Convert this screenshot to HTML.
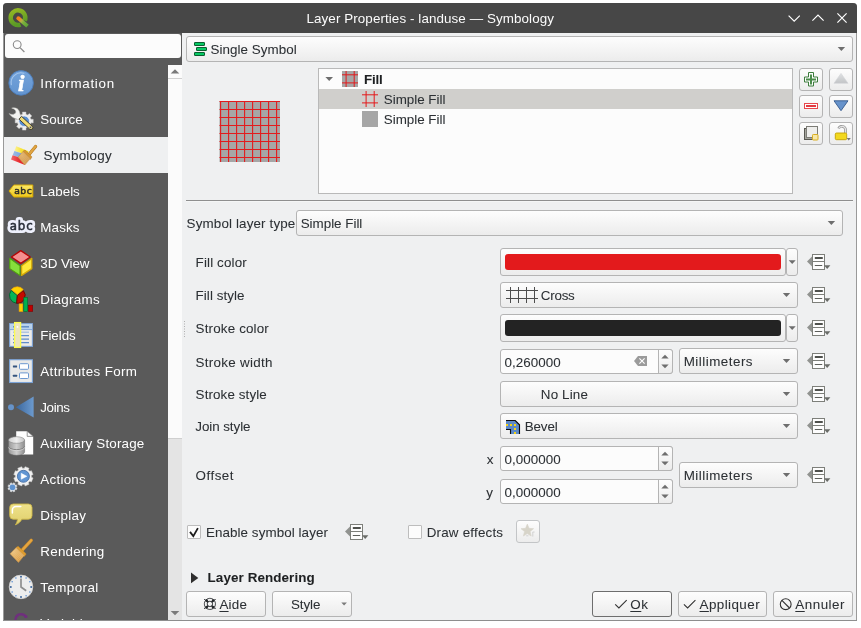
<!DOCTYPE html>
<html lang="en"><head><meta charset="utf-8"><title>Layer Properties - landuse — Symbology</title>
<style>
html,body{margin:0;padding:0}
body{width:861px;height:628px;position:relative;overflow:hidden;background:#fff}
#root{position:absolute;left:0;top:0;width:861px;height:628px;overflow:hidden;background:#fff;font-family:"Liberation Sans",sans-serif;font-size:13.4px;color:#2c3034;will-change:transform}
.a,.t,svg{position:absolute}
.g{display:block;position:static;margin:0;padding:0;border:0;list-style:none}
svg{z-index:1}
.t{white-space:nowrap;line-height:20px;height:20px;-webkit-text-stroke:0.06px;z-index:2}
.t.w{color:#fff;-webkit-text-stroke:0}
.t.b{font-weight:700;color:#1e2022}
.top{z-index:3}
u{text-decoration:underline;text-underline-offset:2px;text-decoration-thickness:1px}
#win{left:3px;top:3px;width:854px;height:618px;background:#eff0f1;border-radius:4px 4px 0 0;box-shadow:inset 0 -1px 0 #8e8e8e, inset 1px 0 0 #9a9a9a, inset -1px 0 0 #9a9a9a}
#title{left:3px;top:3px;width:854px;height:30px;background:#474747;border-radius:4px 4px 0 0}
#side{left:4px;top:60px;width:164px;height:560px;background:#5a5a5a;overflow:hidden}
#sel{left:4px;top:137px;width:164px;height:36px;background:#eff0f1}
.btn{box-sizing:border-box;border:1px solid #b4b4b4;border-radius:3px;background:linear-gradient(#fdfdfd,#ececec)}
.inp{box-sizing:border-box;border:1px solid #b4b4b4;border-radius:3px;background:#fcfcfc}
.sw{border-radius:3px}
</style></head>
<body>
<div id="root">
<div class="a" id="win"></div>
<header class="g" id="titlebar">
<div class="a" id="title"></div>
<span class="t w" style="left:306.5px;top:8.5px;color:#fcfcfc;letter-spacing:0.09px;">Layer Properties - landuse — Symbology</span>
</header>
<nav class="g" id="options-list">
<div class="a " style="left:4px;top:33px;width:178px;height:27px;background:#5a5a5a"></div>
<div class="a " style="left:5px;top:33.5px;width:176px;height:24.799999999999997px;background:#fcfcfc;border-radius:3px"></div>
<div class="a" id="side"></div>
<div class="a" id="sel"></div>
<div class="a " style="left:168px;top:60px;width:14px;height:5px;background:#5a5a5a"></div>
<div class="a " style="left:168px;top:65px;width:14px;height:555px;background:#e4e4e4"></div>
<div class="a " style="left:168px;top:65px;width:14px;height:373px;background:#fbfbfb"></div>
<div class="a " style="left:168px;top:78px;width:14px;height:1px;background:#d0d0d0"></div>
<div class="a " style="left:168px;top:438px;width:14px;height:1px;background:#cfcfcf"></div>
<ul class="g">
<li class="g"><span class="t w" style="left:40.3px;top:74px;letter-spacing:0.68px;">Information</span></li>
<li class="g"><span class="t w" style="left:40.3px;top:110px;letter-spacing:0.01px;">Source</span></li>
<li class="g"><span class="t" style="left:43.5px;top:146px;letter-spacing:0.23px;">Symbology</span></li>
<li class="g"><span class="t w" style="left:40.3px;top:182px;letter-spacing:0.01px;">Labels</span></li>
<li class="g"><span class="t w" style="left:40.3px;top:218px;letter-spacing:0.12px;">Masks</span></li>
<li class="g"><span class="t w" style="left:40.3px;top:254px;letter-spacing:-0.07px;">3D View</span></li>
<li class="g"><span class="t w" style="left:40.3px;top:290px;letter-spacing:0.31px;">Diagrams</span></li>
<li class="g"><span class="t w" style="left:40.3px;top:326px;letter-spacing:-0.05px;">Fields</span></li>
<li class="g"><span class="t w" style="left:40.3px;top:362px;letter-spacing:0.37px;">Attributes Form</span></li>
<li class="g"><span class="t w" style="left:40.3px;top:398px;letter-spacing:-0.39px;">Joins</span></li>
<li class="g"><span class="t w" style="left:40.3px;top:434px;letter-spacing:0.17px;">Auxiliary Storage</span></li>
<li class="g"><span class="t w" style="left:40.3px;top:470px;letter-spacing:0.26px;">Actions</span></li>
<li class="g"><span class="t w" style="left:40.3px;top:506px;letter-spacing:0.27px;">Display</span></li>
<li class="g"><span class="t w" style="left:40.3px;top:542px;letter-spacing:0.25px;">Rendering</span></li>
<li class="g"><span class="t w" style="left:40.3px;top:578px;letter-spacing:0.42px;">Temporal</span></li>
<li class="g"><span class="t w" style="left:40.3px;top:614px;letter-spacing:0.29px;">Variables</span></li>
</ul>
</nav>
<main class="g" id="symbology-page">
<section class="g" id="renderer">
<div class="a btn" style="left:186px;top:36px;width:667px;height:26px;"></div>
<span class="t" style="left:210.4px;top:40px;letter-spacing:0.06px;">Single Symbol</span>
</section>
<section class="g" id="symbol-layers">
<div class="a inp" style="left:318px;top:68px;width:475px;height:126px;border-radius:0;background:#fcfcfc;border-color:#b9b9b9"></div>
<div class="a " style="left:319px;top:89px;width:473px;height:20px;background:#d0cfcc"></div>
<div class="a btn" style="left:799px;top:68px;width:24px;height:23px;"></div>
<div class="a btn" style="left:829px;top:68px;width:24px;height:23px;"></div>
<div class="a btn" style="left:799px;top:95px;width:24px;height:23px;"></div>
<div class="a btn" style="left:829px;top:95px;width:24px;height:23px;"></div>
<div class="a btn" style="left:799px;top:122px;width:24px;height:23px;"></div>
<div class="a btn" style="left:829px;top:122px;width:24px;height:23px;"></div>
<span class="t b" style="left:363.9px;top:70px;letter-spacing:-0.18px;">Fill</span>
<span class="t" style="left:383.8px;top:90px;letter-spacing:-0.02px;">Simple Fill</span>
<span class="t" style="left:383.8px;top:110px;letter-spacing:-0.02px;">Simple Fill</span>
</section>
<section class="g" id="layer-properties">
<div class="a " style="left:186px;top:200px;width:667px;height:1px;background:#8f8f8f"></div>
<div class="a " style="left:186px;top:201px;width:667px;height:1px;background:#f5f6f6"></div>
<div class="a btn" style="left:296px;top:210px;width:547px;height:26px;"></div>
<div class="a btn" style="left:500px;top:248px;width:286px;height:28px;"></div>
<div class="a sw" style="left:505px;top:254px;width:276px;height:16px;background:#e31a1c"></div>
<div class="a btn" style="left:786px;top:248px;width:12px;height:28px;"></div>
<div class="a btn" style="left:500px;top:282px;width:298px;height:26px;"></div>
<div class="a btn" style="left:500px;top:314px;width:286px;height:28px;"></div>
<div class="a sw" style="left:505px;top:320px;width:276px;height:16px;background:#232323"></div>
<div class="a btn" style="left:786px;top:314px;width:12px;height:28px;"></div>
<div class="a inp" style="left:500px;top:349px;width:173px;height:25px;"><div class="a btn" style="right:-1px;top:-1px;width:15px;height:25px;border-radius:0 3px 3px 0"></div></div>
<div class="a btn" style="left:679px;top:348px;width:119px;height:26px;"></div>
<div class="a btn" style="left:500px;top:381px;width:298px;height:26px;"></div>
<div class="a btn" style="left:500px;top:413px;width:298px;height:26px;"></div>
<div class="a inp" style="left:500px;top:446px;width:173px;height:25px;"><div class="a btn" style="right:-1px;top:-1px;width:15px;height:25px;border-radius:0 3px 3px 0"></div></div>
<div class="a inp" style="left:500px;top:479px;width:173px;height:25px;"><div class="a btn" style="right:-1px;top:-1px;width:15px;height:25px;border-radius:0 3px 3px 0"></div></div>
<div class="a btn" style="left:679px;top:462px;width:119px;height:26px;"></div>
<div class="a inp" style="left:187px;top:525px;width:14px;height:14px;border-radius:1px;border-color:#bdbdbd"></div>
<div class="a inp" style="left:408px;top:525px;width:14px;height:14px;border-radius:1px;border-color:#bdbdbd"></div>
<div class="a btn" style="left:516px;top:520px;width:24px;height:23px;border-color:#c3c5c7"></div>
<label class="t" style="left:186.6px;top:214px;letter-spacing:0.14px;">Symbol layer type</label>
<label class="t" style="left:300.7px;top:214px;letter-spacing:-0.01px;">Simple Fill</label>
<label class="t" style="left:195.6px;top:253px;letter-spacing:0.14px;">Fill color</label>
<label class="t" style="left:195.6px;top:286px;letter-spacing:0.06px;">Fill style</label>
<label class="t" style="left:195.6px;top:319px;letter-spacing:0.16px;">Stroke color</label>
<label class="t" style="left:195.6px;top:353px;letter-spacing:0.29px;">Stroke width</label>
<label class="t" style="left:195.6px;top:385px;letter-spacing:0.11px;">Stroke style</label>
<label class="t" style="left:195.3px;top:417px;letter-spacing:-0.07px;">Join style</label>
<label class="t" style="left:195.6px;top:466px;letter-spacing:0.48px;">Offset</label>
<span class="t" style="left:540.8px;top:286px;letter-spacing:-0.24px;">Cross</span>
<span class="t" style="left:504.6px;top:353px;letter-spacing:0.05px;">0,260000</span>
<span class="t" style="left:683.7px;top:352px;letter-spacing:0.49px;">Millimeters</span>
<span class="t" style="left:540.8px;top:385px;letter-spacing:0.16px;">No Line</span>
<span class="t" style="left:524.7px;top:417px;letter-spacing:-0.1px;">Bevel</span>
<label class="t" style="left:486.8px;top:450px;">x</label>
<span class="t" style="left:504.6px;top:450px;letter-spacing:0.05px;">0,000000</span>
<label class="t" style="left:486.3px;top:483px;">y</label>
<span class="t" style="left:504.6px;top:483px;letter-spacing:0.05px;">0,000000</span>
<span class="t" style="left:683.7px;top:466px;letter-spacing:0.49px;">Millimeters</span>
<label class="t" style="left:205.9px;top:523px;letter-spacing:0.08px;">Enable symbol layer</label>
<label class="t" style="left:426.7px;top:523px;letter-spacing:0.2px;">Draw effects</label>
</section>
<section class="g" id="layer-rendering">

<span class="t b" style="left:207.6px;top:568px;letter-spacing:0.1px;">Layer Rendering</span>
</section>
</main>
<footer class="g" id="button-box">
<div class="a btn" style="left:186px;top:591px;width:80px;height:26px;"></div>
<div class="a btn" style="left:272px;top:591px;width:80px;height:26px;"></div>
<div class="a btn" style="left:592px;top:591px;width:80px;height:26px;border-color:#6e6e6e"></div>
<div class="a btn" style="left:678px;top:591px;width:89px;height:26px;"></div>
<div class="a btn" style="left:773px;top:591px;width:80px;height:26px;"></div>
<span class="t" style="left:219.4px;top:595px;letter-spacing:0.26px;"><u>A</u>ide</span>
<span class="t" style="left:290.9px;top:595px;letter-spacing:-0.05px;">Style</span>
<span class="t" style="left:630.3px;top:595px;letter-spacing:0.57px;"><u>O</u>k</span>
<span class="t" style="left:699.5px;top:595px;letter-spacing:0.44px;"><u>A</u>ppliquer</span>
<span class="t" style="left:795.3px;top:595px;letter-spacing:0.51px;"><u>A</u>nnuler</span>
</footer>
<svg class="a" style="left:0;top:0" width="861" height="628" viewBox="0 0 861 628"><defs><linearGradient id="gi" x1="0" y1="0" x2="0" y2="1"><stop offset="0" stop-color="#74a3da"/><stop offset="1" stop-color="#6294d0"/></linearGradient><linearGradient id="gsy" x1="0" y1="0" x2="1" y2="0"><stop offset="0" stop-color="#fbf19a"/><stop offset="0.5" stop-color="#f8e437"/><stop offset="1" stop-color="#f5df2c"/></linearGradient><linearGradient id="gsb" x1="0" y1="0" x2="1" y2="0"><stop offset="0" stop-color="#9cbde6"/><stop offset="1" stop-color="#6594d2"/></linearGradient><linearGradient id="gsr" x1="0" y1="0" x2="1" y2="0"><stop offset="0" stop-color="#f0696c"/><stop offset="0.6" stop-color="#e82a2e"/><stop offset="1" stop-color="#e82226"/></linearGradient><pattern id="pbr" width="1.4" height="1.4" patternUnits="userSpaceOnUse" patternTransform="rotate(42)"><rect width="1.4" height="1.4" fill="#e3b672"/><rect width="0.7" height="0.7" fill="#c98f45"/><rect x="0.7" y="0.7" width="0.7" height="0.7" fill="#d39a4f"/></pattern><linearGradient id="ghd" x1="0" y1="0" x2="1" y2="1"><stop offset="0" stop-color="#ecb354"/><stop offset="1" stop-color="#cf8a24"/></linearGradient><linearGradient id="gl" x1="0" y1="0" x2="0" y2="1"><stop offset="0" stop-color="#fbe96a"/><stop offset="1" stop-color="#f0c81a"/></linearGradient><linearGradient id="gj" x1="0" y1="0" x2="1" y2="0"><stop offset="0" stop-color="#3a669c"/><stop offset="1" stop-color="#6c9ace"/></linearGradient><linearGradient id="gc" x1="0" y1="0" x2="1" y2="0"><stop offset="0" stop-color="#9a9a9a"/><stop offset="0.5" stop-color="#cfcfcf"/><stop offset="1" stop-color="#8e8e8e"/></linearGradient><linearGradient id="gct" x1="0" y1="0" x2="1" y2="0"><stop offset="0" stop-color="#d0d0d0"/><stop offset="0.5" stop-color="#efefef"/><stop offset="1" stop-color="#c4c4c4"/></linearGradient><linearGradient id="gd" x1="0" y1="0" x2="0" y2="1"><stop offset="0" stop-color="#eee28a"/><stop offset="1" stop-color="#e0cf6c"/></linearGradient><pattern id="pbr2" width="1.4" height="1.4" patternUnits="userSpaceOnUse" patternTransform="rotate(42)"><rect width="1.4" height="1.4" fill="#efc98a"/><rect width="0.7" height="0.7" fill="#d9993f"/><rect x="0.7" y="0.7" width="0.7" height="0.7" fill="#e0a552"/></pattern><linearGradient id="gup" x1="0" y1="0" x2="0" y2="1"><stop offset="0" stop-color="#dfe1e3"/><stop offset="1" stop-color="#c2c4c6"/></linearGradient><linearGradient id="gq" x1="0" y1="0" x2="0.3" y2="1"><stop offset="0" stop-color="#94b823"/><stop offset="1" stop-color="#5a9a26"/></linearGradient><linearGradient id="gt" gradientUnits="userSpaceOnUse" x1="17.5" y1="17.5" x2="27" y2="26"><stop offset="0" stop-color="#f47f1c"/><stop offset="0.22" stop-color="#ee8a28"/><stop offset="0.42" stop-color="#b5b044"/><stop offset="0.6" stop-color="#7cb03c"/><stop offset="1" stop-color="#5ea336"/></linearGradient><clipPath id="cw"><rect x="3" y="3" width="854" height="617.500"/></clipPath></defs><g clip-path="url(#cw)"><circle cx="21.100" cy="82.900" r="12.300" fill="url(#gi)" stroke="#4b7cba" stroke-width="0.9"/><path d="M11.300 84.600a9.900 9.900 0 0 1 12.600-11.300" fill="none" stroke="#a5c6ec" stroke-width="1.100" stroke-linecap="round"/><text x="21.300" y="91.200" text-anchor="middle" font-family="Liberation Serif, serif" font-style="italic" font-weight="700" font-size="23" fill="#fff" stroke="#fff" stroke-width="0.6">i</text><path d="M33.22 119.31L33.22 122.89L30.97 122.87L30.24 124.64L31.85 126.21L29.31 128.75L27.74 127.14L25.97 127.87L25.99 130.12L22.41 130.12L22.43 127.87L20.66 127.14L19.09 128.75L16.55 126.21L18.16 124.64L17.43 122.87L15.18 122.89L15.18 119.31L17.43 119.33L18.16 117.56L16.55 115.99L19.09 113.45L20.66 115.06L22.43 114.33L22.41 112.08L25.99 112.08L25.97 114.33L27.74 115.06L29.31 113.45L31.85 115.99L30.24 117.56L30.97 119.33z" fill="#ededed" stroke="#c4c4c4" stroke-width="0.5" stroke-linejoin="round"/><circle cx="24.2" cy="121.2" r="5.3" fill="#5b8fd0" stroke="#f4f4f4" stroke-width="0.8"/><path d="M11.700 108.200C15 107 18.700 108.700 19.500 112C20 114 20.300 115.600 20.700 117.200L18 119.500C15.800 118.600 12.200 118.200 9.200 113.600C11.600 115.100 14.700 114.700 15.700 112.700C16.500 110.900 14.700 108.800 11.700 108.200Z" fill="#f2f2f0" stroke="#c4c4c0" stroke-width="0.5"/><path d="M19.01 119.20L21.59 116.40L32.19 126.20A1.9 1.9 0 0 1 29.61 129.00Z" fill="#f1dc74" stroke="#33332a" stroke-width="0.9" stroke-linejoin="round"/><circle cx="30.500" cy="127.300" r="1" fill="#4a4a4a" stroke="#d8d8d8" stroke-width="0.4"/><path d="M16.200 146.300L28.600 151.200L26.800 155L14.400 151z" fill="url(#gsy)"/><path d="M14.400 151L26.800 155L25.200 159.200L12.600 155.200z" fill="url(#gsb)"/><path d="M12.600 155.200L25.200 159.200L25 165L11 159.600z" fill="url(#gsr)"/><path d="M28.400 155.200L35.600 146.400" stroke="#b5761c" stroke-width="3.2" stroke-linecap="round"/><path d="M28.400 155.200L35.600 146.400" stroke="#e0a542" stroke-width="2.2" stroke-linecap="round"/><path d="M23 151.300l2-1.300l6.400 6.200a1.200 1.200 0 0 1 0 1.700l-1.200 1.600z" fill="#d59532" stroke="#b27622" stroke-width="0.5" stroke-linejoin="round"/><path d="M23 151.400l7.300 7.200l-5.500 6.400l-6.800-7.800z" fill="url(#pbr)" stroke="#c08c48" stroke-width="0.5" stroke-linejoin="round"/><path d="M9 191L13.8 185h19v12h-19z" fill="url(#gl)" stroke="#d6a904" stroke-width="1" stroke-linejoin="round"/><text x="23.200" y="194.300" text-anchor="middle" font-family="DejaVu Sans, Liberation Sans, sans-serif" font-size="9.2" letter-spacing="0.5" fill="#2f2f28" stroke="#2f2f28" stroke-width="0.5">abc</text><text x="21.700" y="229.800" text-anchor="middle" font-family="DejaVu Sans, Liberation Sans, sans-serif" font-size="11.8" letter-spacing="0.9" fill="#eef0fc" stroke="#eef0fc" stroke-width="6.2" stroke-linejoin="round">abc</text><text x="21.700" y="229.800" text-anchor="middle" font-family="DejaVu Sans, Liberation Sans, sans-serif" font-size="11.8" letter-spacing="0.9" fill="#2a2f3a" stroke="#2a2f3a" stroke-width="0.55">abc</text><path d="M20.8 250.6L30.2 257L20.8 263.4L11.4 257z" fill="#f58e8e" stroke="#b40404" stroke-width="1.3" stroke-linejoin="round"/><path d="M9.8 258.400L20 265.800V275.400L9.8 268.600z" fill="#86e03c" stroke="#52a40c" stroke-width="1.1" stroke-linejoin="round"/><path d="M31.8 258.400L21.600 265.800V275.400L31.8 268.600z" fill="#ffe93c" stroke="#d4a806" stroke-width="1.3" stroke-linejoin="round"/><path d="M17.3 295.5L16.62 303.27A7.8 7.8 0 0 1 11.32 290.49z" fill="#06b457" stroke="#02602c" stroke-width="0.9" stroke-linejoin="round"/><path d="M17.3 295.5L23.28 290.49A7.8 7.8 0 0 1 16.62 303.27z" fill="#c40a00" stroke="#6a0400" stroke-width="0.9" stroke-linejoin="round"/><path d="M17.3 294.6L11.32 289.59A7.8 7.8 0 0 1 23.28 289.59z" fill="#ffd200" stroke="#ffae00" stroke-width="0.7" stroke-linejoin="round"/><rect x="19.100" y="303.900" width="3.700" height="7.600" fill="#ffd000" stroke="#f0a000" stroke-width="0.6"/><rect x="23.8" y="297.4" width="3.8" height="14" fill="#00b050" stroke="#00702c" stroke-width="0.6"/><rect x="28.5" y="305.2" width="4.2" height="6.2" fill="#c00000" stroke="#800000" stroke-width="0.6"/><rect x="9.600" y="323.600" width="22.800" height="22.800" fill="#edece9" stroke="#7da2d4" stroke-width="1.1"/><rect x="10.100" y="324.100" width="21.800" height="5" fill="#b7d2ec"/><path d="M10 329.600h22" stroke="#7fa5d8" stroke-width="1"/><path d="M13 326.800h16" stroke="#5b88c4" stroke-width="1.4"/><path d="M13 332.200h16" stroke="#9fbbe0" stroke-width="1.2"/><path d="M13 335.600h16M13 339.100h16M13 342.600h16" stroke="#5f8ccb" stroke-width="1.1"/><rect x="14.600" y="322.600" width="6" height="24.800" fill="#ece4bf" stroke="#fcfc50" stroke-width="1.3"/><circle cx="17.500" cy="326.900" r="0.9" fill="#fff"/><rect x="9.600" y="359.700" width="22.800" height="22.800" fill="#e9e9e8" stroke="#7aa2d6" stroke-width="1.1"/><rect x="12.900" y="365.400" width="4.200" height="2" rx="0.4" fill="#35557f"/><rect x="12.900" y="374.800" width="4.200" height="2" rx="0.4" fill="#35557f"/><rect x="19.500" y="363.700" width="9" height="5.600" rx="0.9" fill="#fff" stroke="#6c98d0" stroke-width="1"/><rect x="19.500" y="372.900" width="9" height="5.600" rx="0.9" fill="#fff" stroke="#6c98d0" stroke-width="1"/><circle cx="11" cy="407.200" r="3" fill="#6693c9"/><path d="M15.8 407.2L33.6 396.4V417.6z" fill="url(#gj)"/><path d="M16.200 431.200h11l6 5.200v18.200h-17z" fill="#fff"/><path d="M27.200 431.200v5.200h6z" fill="#fbfbfb" stroke="#6e6e6e" stroke-width="0.7" stroke-linejoin="round"/><path d="M8.600 440v12a8 3.300 0 0 0 16 0v-12z" fill="url(#gc)" stroke="#6a6a6a" stroke-width="0.5"/><path d="M8.600 446.400a8 3.300 0 0 0 16 0" fill="none" stroke="#777" stroke-width="0.9"/><path d="M8.600 447.300a8 3.300 0 0 0 16 0" fill="none" stroke="#e2e2e2" stroke-width="0.6"/><ellipse cx="16.600" cy="440" rx="8" ry="3.300" fill="url(#gct)" stroke="#8a8a8a" stroke-width="0.6"/><path d="M33.05 477.98L31.42 481.94L29.78 481.29L28.39 482.68L29.04 484.32L25.08 485.95L24.38 484.34L22.42 484.34L21.72 485.95L17.76 484.32L18.41 482.68L17.02 481.29L15.38 481.94L13.75 477.98L15.36 477.28L15.36 475.32L13.75 474.62L15.38 470.66L17.02 471.31L18.41 469.92L17.76 468.28L21.72 466.65L22.42 468.26L24.38 468.26L25.08 466.65L29.04 468.28L28.39 469.92L29.78 471.31L31.42 470.66L33.05 474.62L31.44 475.32L31.44 477.28z" fill="#f1f1f1" stroke="#cfcfcf" stroke-width="0.5" stroke-linejoin="round"/><circle cx="23.400" cy="476.300" r="6" fill="#6195d2" stroke="#3d689f" stroke-width="0.8"/><path d="M21.200 473.300L26.900 476.300L21.200 479.300z" fill="#fff" stroke="#fff" stroke-width="0.5" stroke-linejoin="round"/><path d="M17.11 488.22L16.41 489.91L15.45 489.53L14.73 490.25L15.11 491.21L13.42 491.91L13.01 490.97L11.99 490.97L11.58 491.91L9.89 491.21L10.27 490.25L9.55 489.53L8.59 489.91L7.89 488.22L8.83 487.81L8.83 486.79L7.89 486.38L8.59 484.69L9.55 485.07L10.27 484.35L9.89 483.39L11.58 482.69L11.99 483.63L13.01 483.63L13.42 482.69L15.11 483.39L14.73 484.35L15.45 485.07L16.41 484.69L17.11 486.38L16.17 486.79L16.17 487.81z" fill="#e4e6ea" stroke="#cfd3da" stroke-width="0.4" stroke-linejoin="round"/><circle cx="12.500" cy="487.300" r="2.900" fill="#5f93d0"/><path d="M13.300 504h15.100a3.600 3.600 0 0 1 3.600 3.600v8a3.600 3.600 0 0 1-3.600 3.600h-6.600c-1.200 2.400-3.200 4.400-6.400 5.600c1.200-1.600 1.900-3.400 2.100-5.600h-4.200a3.600 3.600 0 0 1-3.600-3.600v-8a3.600 3.600 0 0 1 3.600-3.600z" fill="url(#gd)" stroke="#cdb748" stroke-width="0.9" stroke-linejoin="round"/><path d="M12.400 513v-2.800a3.600 3.600 0 0 1 3.600-3.600h4.800" fill="none" stroke="#fff" stroke-width="1.500" stroke-linecap="round"/><path d="M22.600 549.700L31.200 540.300" stroke="#c98a26" stroke-width="3.400" stroke-linecap="round"/><path d="M22.600 549.700L31.200 540.300" stroke="#e5a541" stroke-width="2.300" stroke-linecap="round"/><path d="M16.200 547.500l1.900-1.200l7.500 7a1.200 1.200 0 0 1 0 1.700l-1.400 1.400z" fill="#de9c30" stroke="#c48820" stroke-width="0.5" stroke-linejoin="round"/><path d="M16.200 547.600l8 7.800l-5.700 7l-8.400-8.600z" fill="url(#pbr2)" stroke="#d29a4a" stroke-width="0.5" stroke-linejoin="round"/><circle cx="21" cy="586.9" r="11.800" fill="#ededed" stroke="#d2d2d2" stroke-width="0.8"/><circle cx="21.00" cy="576.70" r="1" fill="#3c679e"/><circle cx="26.10" cy="578.07" r="0.8" fill="#5a90d4"/><circle cx="29.83" cy="581.80" r="0.8" fill="#5a90d4"/><circle cx="31.20" cy="586.90" r="1" fill="#3c679e"/><circle cx="29.83" cy="592.00" r="0.8" fill="#5a90d4"/><circle cx="26.10" cy="595.73" r="0.8" fill="#5a90d4"/><circle cx="21.00" cy="597.10" r="1" fill="#3c679e"/><circle cx="15.90" cy="595.73" r="0.8" fill="#5a90d4"/><circle cx="12.17" cy="592.00" r="0.8" fill="#5a90d4"/><circle cx="10.80" cy="586.90" r="1" fill="#3c679e"/><circle cx="12.17" cy="581.80" r="0.8" fill="#5a90d4"/><circle cx="15.90" cy="578.07" r="0.8" fill="#5a90d4"/><path d="M21 578.400V587L26.200 590.800" fill="none" stroke="#8e8e8e" stroke-width="1.7" stroke-linejoin="round"/><path d="M15.200 621c0.200-4.600 2.600-6.800 5.800-6.800c2.200 0 3.900 0.900 4.800 2.600" fill="none" stroke="#6f2f7d" stroke-width="2.500" stroke-linecap="round"/><circle cx="26" cy="616.600" r="1.500" fill="#6f2f7d"/><path d="M20.51 24.61A7.35 7.35 0 1 1 24.71 20.69" fill="none" stroke="url(#gq)" stroke-width="4.5"/><path d="M18.400 18.300L27.500 26.100" fill="none" stroke="url(#gt)" stroke-width="3.800"/><circle cx="18.300" cy="18.200" r="1.900" fill="#f3801d"/><path d="M788.6 15.6L794.2 21.2L799.8 15.6" fill="none" stroke="#fcfcfc" stroke-width="1.2"/><path d="M812.4 20.6L818 15L823.6 20.6" fill="none" stroke="#fcfcfc" stroke-width="1.2"/><path d="M837.4 13.4L846.6 22.6M846.6 13.4L837.4 22.6" fill="none" stroke="#fcfcfc" stroke-width="1.2"/><circle cx="17.2" cy="44.6" r="3.9" fill="none" stroke="#8c8c8c" stroke-width="1.1"/><path d="M20 47.6L24.4 52" stroke="#8c8c8c" stroke-width="1.3"/><path d="M170.70 73.50h8.6l-4.30 -4.2z" fill="#7a7a7a"/><path d="M170.70 611.10h8.6l-4.30 4.2z" fill="#7a7a7a"/><rect x="194.5" y="42.5" width="10" height="3" rx="0.3" fill="#04c862" stroke="#0b5e30" stroke-width="1"/><rect x="196.5" y="47.5" width="10" height="3" rx="0.3" fill="#04c862" stroke="#0b5e30" stroke-width="1"/><rect x="194.5" y="52.5" width="10" height="3" rx="0.3" fill="#04c862" stroke="#0b5e30" stroke-width="1"/><path d="M837.70 47.00h7.4l-3.70 4z" fill="#6e6e6e"/><path d="M827.70 221.00h7.4l-3.70 4z" fill="#6e6e6e"/><path d="M782.80 293.00h7.4l-3.70 4z" fill="#6e6e6e"/><path d="M782.80 359.00h7.4l-3.70 4z" fill="#6e6e6e"/><path d="M782.80 392.00h7.4l-3.70 4z" fill="#6e6e6e"/><path d="M782.80 424.00h7.4l-3.70 4z" fill="#6e6e6e"/><path d="M782.80 473.00h7.4l-3.70 4z" fill="#6e6e6e"/><path d="M788.70 260.30h7l-3.50 3.8z" fill="#6e6e6e"/><path d="M788.70 326.30h7l-3.50 3.8z" fill="#6e6e6e"/><path d="M341.30 602.40h5.6l-2.80 3.2z" fill="#7a7a7a"/><rect x="219.5" y="101" width="60.5" height="61" fill="#a6a6a6"/><path d="M220.6 101v61M228.6 101v61M236.6 101v61M244.6 101v61M252.6 101v61M260.6 101v61M268.6 101v61M276.6 101v61M219.5 101.5h60.5M219.5 109.5h60.5M219.5 117.5h60.5M219.5 125.5h60.5M219.5 133.5h60.5M219.5 141.5h60.5M219.5 149.5h60.5M219.5 157.5h60.5" stroke="#e31a1c" stroke-width="1.1" fill="none"/><path d="M325.40 77.00h7.6l-3.80 4z" fill="#6e6e6e"/><rect x="342" y="71" width="16" height="16" fill="#a6a6a6"/><path d="M346.1 71v16M354.2 71v16M342 74.8h16M342 82.9h16" stroke="#e31a1c" stroke-width="1" fill="none"/><path d="M366.1 91v16M374.200 91v16M362 94.800h16M362 102.900h16" stroke="#e31a1c" stroke-width="1" fill="none"/><rect x="362" y="111" width="16" height="16" fill="#a6a6a6"/><path d="M808.500 72.500h5v4.500h4v5h-4v4h-5v-4h-4v-5h4z" fill="#fdfdfd" stroke="#3d7d3d" stroke-width="1"/><path d="M810 74.500h2v4h4v2h-4v4h-2v-4h-4v-2h4z" fill="#4b8c4b"/><rect x="804.500" y="103.500" width="13" height="5" fill="#fdfdfd" stroke="#e8474c" stroke-width="1"/><rect x="806" y="105" width="10" height="2" fill="#e23a40"/><path d="M841 73.400L848 83.300H834z" fill="url(#gup)" stroke="#d2d4d6" stroke-width="0.6" stroke-linejoin="round"/><path d="M834 100.800H848L841 110.700z" fill="#6793cb" stroke="#34598c" stroke-width="0.9" stroke-linejoin="round"/><rect x="804.500" y="128.500" width="11" height="11" fill="#a5a59d" stroke="#585852" stroke-width="1"/><rect x="806.500" y="126.500" width="11" height="11" fill="#eeeeec" stroke="#7c7c76" stroke-width="1"/><rect x="812.500" y="134.500" width="5.500" height="5.500" rx="0.8" fill="#f6e7a8" stroke="#d9ad1e" stroke-width="1"/><path d="M845.500 133v-3a3.600 3.600 0 0 0-6.900-1.500" fill="none" stroke="#8e8e8e" stroke-width="2.6"/><path d="M845.500 133v-3a3.600 3.600 0 0 0-6.900-1.500" fill="none" stroke="#e4e4e4" stroke-width="1.2"/><rect x="835.300" y="133" width="11.400" height="6.700" rx="1.200" fill="#f2d81e" stroke="#c4a000" stroke-width="0.9"/><path d="M846.60 138.00h4.2l-2.10 2.6z" fill="#777"/><g><path d="M807 261.5L812.5 256V267z" fill="#919390"/><rect x="812.5" y="254.5" width="12" height="15" fill="#fdfdfd" stroke="#7d7f7a" stroke-width="1"/><path d="M812.5 261.5h12" stroke="#7d7f7a" stroke-width="1"/><rect x="814.8" y="257" width="8" height="2" rx="0.5" fill="#4f514d"/><rect x="814.8" y="265" width="7.400" height="1" fill="#5d5f5b"/><path d="M824 265.3h6.400l-3.200 3.800z" fill="#6a6c68"/></g><g><path d="M807 294.5L812.5 289V300z" fill="#919390"/><rect x="812.5" y="287.5" width="12" height="15" fill="#fdfdfd" stroke="#7d7f7a" stroke-width="1"/><path d="M812.5 294.5h12" stroke="#7d7f7a" stroke-width="1"/><rect x="814.8" y="290" width="8" height="2" rx="0.5" fill="#4f514d"/><rect x="814.8" y="298" width="7.400" height="1" fill="#5d5f5b"/><path d="M824 298.3h6.400l-3.200 3.800z" fill="#6a6c68"/></g><g><path d="M807 327.5L812.5 322V333z" fill="#919390"/><rect x="812.5" y="320.5" width="12" height="15" fill="#fdfdfd" stroke="#7d7f7a" stroke-width="1"/><path d="M812.5 327.5h12" stroke="#7d7f7a" stroke-width="1"/><rect x="814.8" y="323" width="8" height="2" rx="0.5" fill="#4f514d"/><rect x="814.8" y="331" width="7.400" height="1" fill="#5d5f5b"/><path d="M824 331.3h6.400l-3.200 3.800z" fill="#6a6c68"/></g><g><path d="M807 360.5L812.5 355V366z" fill="#919390"/><rect x="812.5" y="353.5" width="12" height="15" fill="#fdfdfd" stroke="#7d7f7a" stroke-width="1"/><path d="M812.5 360.5h12" stroke="#7d7f7a" stroke-width="1"/><rect x="814.8" y="356" width="8" height="2" rx="0.5" fill="#4f514d"/><rect x="814.8" y="364" width="7.400" height="1" fill="#5d5f5b"/><path d="M824 364.3h6.400l-3.200 3.800z" fill="#6a6c68"/></g><g><path d="M807 393.5L812.5 388V399z" fill="#919390"/><rect x="812.5" y="386.5" width="12" height="15" fill="#fdfdfd" stroke="#7d7f7a" stroke-width="1"/><path d="M812.5 393.5h12" stroke="#7d7f7a" stroke-width="1"/><rect x="814.8" y="389" width="8" height="2" rx="0.5" fill="#4f514d"/><rect x="814.8" y="397" width="7.400" height="1" fill="#5d5f5b"/><path d="M824 397.3h6.400l-3.200 3.800z" fill="#6a6c68"/></g><g><path d="M807 425.5L812.5 420V431z" fill="#919390"/><rect x="812.5" y="418.5" width="12" height="15" fill="#fdfdfd" stroke="#7d7f7a" stroke-width="1"/><path d="M812.5 425.5h12" stroke="#7d7f7a" stroke-width="1"/><rect x="814.8" y="421" width="8" height="2" rx="0.5" fill="#4f514d"/><rect x="814.8" y="429" width="7.400" height="1" fill="#5d5f5b"/><path d="M824 429.3h6.400l-3.200 3.800z" fill="#6a6c68"/></g><g><path d="M807 474.5L812.5 469V480z" fill="#919390"/><rect x="812.5" y="467.5" width="12" height="15" fill="#fdfdfd" stroke="#7d7f7a" stroke-width="1"/><path d="M812.5 474.5h12" stroke="#7d7f7a" stroke-width="1"/><rect x="814.8" y="470" width="8" height="2" rx="0.5" fill="#4f514d"/><rect x="814.8" y="478" width="7.400" height="1" fill="#5d5f5b"/><path d="M824 478.3h6.400l-3.200 3.800z" fill="#6a6c68"/></g><g><path d="M345 531.5L350.5 526V537z" fill="#919390"/><rect x="350.5" y="524.5" width="12" height="15" fill="#fdfdfd" stroke="#7d7f7a" stroke-width="1"/><path d="M350.5 531.5h12" stroke="#7d7f7a" stroke-width="1"/><rect x="352.8" y="527" width="8" height="2" rx="0.5" fill="#4f514d"/><rect x="352.8" y="535" width="7.400" height="1" fill="#5d5f5b"/><path d="M362 535.3h6.400l-3.200 3.800z" fill="#6a6c68"/></g><path d="M506 290.500h32M506 298.500h32M510.500 287v16M518.500 287v16M526.500 287v16M534.500 287v16" stroke="#4d4d4d" stroke-width="1" fill="none"/><path d="M634 361L638 356h9v10h-9z" fill="#9b9b9b"/><path d="M639.400 358.400L644.600 363.600M644.600 358.400L639.400 363.600" stroke="#fff" stroke-width="1.100"/><path d="M661.30 358.60h7.4l-3.70 -3.8z" fill="#6e6e6e"/><path d="M661.30 364.40h7.4l-3.70 3.8z" fill="#6e6e6e"/><path d="M661.30 455.60h7.4l-3.70 -3.8z" fill="#6e6e6e"/><path d="M661.30 461.40h7.4l-3.70 3.8z" fill="#6e6e6e"/><path d="M661.30 488.60h7.4l-3.70 -3.8z" fill="#6e6e6e"/><path d="M661.30 494.40h7.4l-3.70 3.8z" fill="#6e6e6e"/><path d="M506 420h9.300l4.700 4.700v9.300h-9.500v-4.500h-4.500z" fill="#5d89c6"/><path d="M506 420.500h9.200l4.300 4.300v9.200" fill="none" stroke="#0c0c0c" stroke-width="1.1"/><path d="M506 429.500h4.500v4.500" fill="none" stroke="#0c0c0c" stroke-width="1.1"/><rect x="506" y="424" width="2" height="2" fill="#f5d312"/><rect x="510" y="424" width="2" height="2" fill="#f5d312"/><rect x="514" y="424" width="2" height="2" fill="#f5d312"/><rect x="514" y="428" width="2" height="2" fill="#f5d312"/><rect x="514" y="432" width="2" height="2" fill="#f5d312"/><path d="M190 531.900L193.300 536.100L197.900 528.100" fill="none" stroke="#1d1d1d" stroke-width="1.8"/><path d="M527.30 524.10L529.00 528.35L533.58 528.66L530.06 531.60L531.18 536.04L527.30 533.60L523.42 536.04L524.54 531.60L521.02 528.66L525.60 528.35z" fill="#d7d4c9" stroke="#d7d4c9" stroke-width="0.6" stroke-linejoin="round"/><path d="M532.800 536.600v-4.600h1.800" fill="none" stroke="#cfcfcf" stroke-width="0.9"/><path d="M526.200 535.800h2.200" fill="none" stroke="#cfcfcf" stroke-width="0.9"/><path d="M191 572.600L198.300 577.900L191 583.200z" fill="#2e2e2e"/><circle cx="209.9" cy="603.9" r="5.600" fill="none" stroke="#232629" stroke-width="0.8"/><circle cx="209.9" cy="603.9" r="2.700" fill="none" stroke="#232629" stroke-width="0.9"/><path d="M212.17 605.16L214.97 606.71A5.8 5.8 0 0 1 212.71 608.97L211.16 606.17A2.6 2.6 0 0 0 212.17 605.16zM208.64 606.17L207.09 608.97A5.8 5.8 0 0 1 204.83 606.71L207.63 605.16A2.6 2.6 0 0 0 208.64 606.17zM207.63 602.64L204.83 601.09A5.8 5.8 0 0 1 207.09 598.83L208.64 601.63A2.6 2.6 0 0 0 207.63 602.64zM211.16 601.63L212.71 598.83A5.8 5.8 0 0 1 214.97 601.09L212.17 602.64A2.6 2.6 0 0 0 211.16 601.63z" fill="#232629"/><path d="M204.200 598.900h1.200v1.200h-1.200zM214.400 598.900h1.200v1.200h-1.200zM204.200 607.700h1.200v1.200h-1.200zM214.400 607.700h1.200v1.200h-1.200z" fill="#232629"/><path d="M615.200 604.300L618.900 608L626.700 600.200" fill="none" stroke="#333" stroke-width="1.100"/><path d="M683.900 604.300L687.600 608L695.400 600.200" fill="none" stroke="#333" stroke-width="1.100"/><circle cx="785.700" cy="604.200" r="5.400" fill="none" stroke="#333" stroke-width="1.100"/><path d="M781.900 600.400L789.500 608" stroke="#333" stroke-width="1.100"/><path d="M184.500 321v16" stroke="#b0b0b0" stroke-width="1" stroke-dasharray="1 1.500"/></g></svg>
<div class="a top" style="left:0px;top:620px;width:861px;height:8px;background:#fff"></div><div class="a top" style="left:3px;top:620px;width:854px;height:1px;background:#8e8e8e"></div>
</div>
</body></html>
